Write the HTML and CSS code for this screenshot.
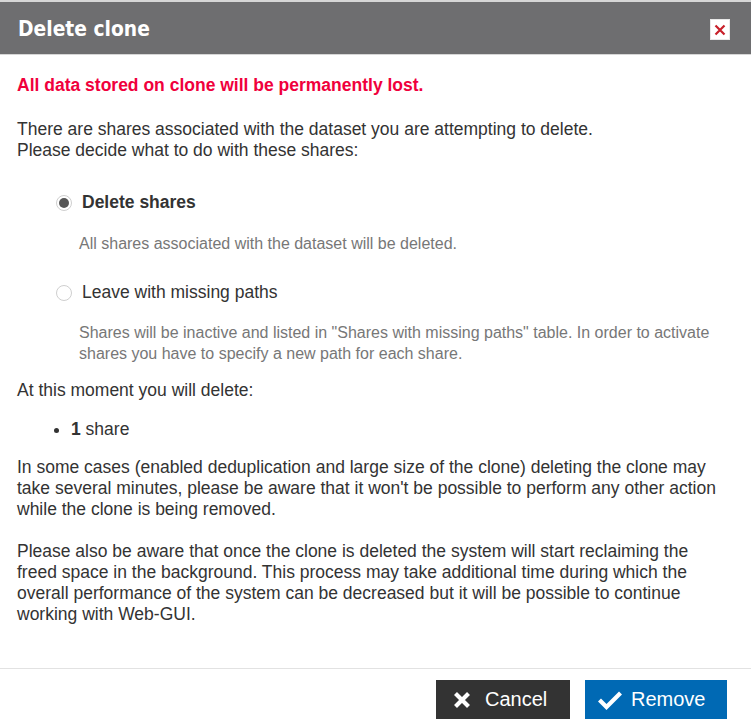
FILE: index.html
```html
<!DOCTYPE html>
<html>
<head>
<meta charset="utf-8">
<link rel="stylesheet" href="styles.css">
</head>
<body>
<div class="dialog">
  <div class="header">
    <h1 class="title">Delete clone</h1>
    <button class="close" aria-label="Close">
      <svg width="12" height="12" viewBox="0 0 12 12"><path d="M1.5 1.5 L10.5 10.5 M10.5 1.5 L1.5 10.5" stroke="#c8202a" stroke-width="2.2" fill="none"/></svg>
    </button>
  </div>
  <div class="content">
    <p class="warning">All data stored on clone will be permanently lost.</p>
    <p class="intro">There are shares associated with the dataset you are attempting to delete.<br>Please decide what to do with these shares:</p>
    <div class="option">
      <span class="radio checked"></span>
      <span class="opt-label bold">Delete shares</span>
    </div>
    <p class="opt-desc first">All shares associated with the dataset will be deleted.</p>
    <div class="option second">
      <span class="radio"></span>
      <span class="opt-label">Leave with missing paths</span>
    </div>
    <p class="opt-desc second">Shares will be inactive and listed in "Shares with missing paths" table. In order to activate shares you have to specify a new path for each share.</p>
    <p class="moment">At this moment you will delete:</p>
    <ul class="list">
      <li><b>1</b> share</li>
    </ul>
    <p class="para">In some cases (enabled deduplication and large size of the clone) deleting the clone may take several minutes, please be aware that it won't be possible to perform any other action while the clone is being removed.</p>
    <p class="para second">Please also be aware that once the clone is deleted the system will start reclaiming the freed space in the background. This process may take additional time during which the overall performance of the system can be decreased but it will be possible to continue working with Web-GUI.</p>
  </div>
  <div class="footer">
    <button class="btn cancel">
      <svg width="18" height="18" viewBox="0 0 18 18"><path d="M2.5 2.5 L15.5 15.5 M15.5 2.5 L2.5 15.5" stroke="#fff" stroke-width="4.2" fill="none"/></svg>
      <span>Cancel</span>
    </button>
    <button class="btn remove">
      <svg width="26" height="20" viewBox="0 0 26 20"><path d="M2.5 10 L9.5 17 L23.5 3" stroke="#fff" stroke-width="4.2" fill="none"/></svg>
      <span>Remove</span>
    </button>
  </div>
</div>
</body>
</html>
```

FILE: styles.css
```css
html, body {
  margin: 0;
  padding: 0;
  background: #fff;
}
body {
  font-family: "Liberation Sans", Arial, sans-serif;
  color: #333;
  font-size: 17.5px;
}
.dialog {
  width: 751px;
  height: 724px;
  display: flex;
  flex-direction: column;
}
.header {
  height: 52px;
  background: #6e6e70;
  border-top: 2px solid #d6d6d6;
  border-bottom: 1px solid #d6d6d6;
  display: flex;
  align-items: center;
  justify-content: space-between;
  padding: 0 21px 0 18px;
}
.title {
  margin: 0;
  font-family: "DejaVu Sans Condensed", "DejaVu Sans", sans-serif;
  font-stretch: condensed;
  font-weight: bold;
  font-size: 20.8px;
  color: #fff;
  padding-top: 1px;
}
.close {
  width: 20px;
  height: 21px;
  padding: 0;
  border: 1px solid #e8e8e8;
  background: #fff;
  display: flex;
  align-items: center;
  justify-content: center;
  margin: 3px 0 0 0;
}
.content {
  padding: 0 26px 0 17px;
  line-height: 21px;
}
.content p {
  margin: 0;
}
.warning {
  margin-top: 20px !important;
  color: #f0003c;
  font-weight: bold;
}
.intro {
  margin-top: 23px !important;
}
.option {
  display: flex;
  align-items: center;
  margin-top: 31px;
  padding-left: 39px;
  height: 21px;
}
.option.second {
  margin-top: 28px;
}
.radio {
  width: 16px;
  height: 16px;
  border: 1px solid #cfcfcf;
  border-radius: 50%;
  box-sizing: border-box;
  background: #fff;
  display: flex;
  align-items: center;
  justify-content: center;
  margin-right: 10px;
}
.radio.checked::after {
  content: "";
  width: 10px;
  height: 10px;
  border-radius: 50%;
  background: #555;
}
.opt-label.bold {
  font-weight: bold;
}
.opt-desc {
  font-size: 16px;
  color: #777;
  padding-left: 62px;
  margin-top: 20px !important;
}
.opt-desc.second {
  margin-top: 19px !important;
}
.moment {
  margin-top: 16px !important;
}
.list {
  margin: 18px 0 0 0;
  padding-left: 54px;
}
.list li {
  line-height: 21px;
}
.para {
  margin-top: 17px !important;
}
.para.second {
  margin-top: 21px !important;
}
.footer {
  margin-top: auto;
  border-top: 1px solid #e2e2e2;
  height: 56px;
  display: flex;
  justify-content: flex-end;
  align-items: flex-start;
  padding: 11px 24px 0 0;
  box-sizing: border-box;
  gap: 15px;
}
.btn {
  height: 39px;
  border: none;
  display: flex;
  align-items: center;
  color: #fff;
  font-family: "Liberation Sans", Arial, sans-serif;
  font-size: 20px;
  padding: 0;
  margin: 0;
}
.btn.cancel {
  width: 134px;
  background: #333;
  padding-left: 17px;
}
.btn.cancel span {
  margin-left: 14px;
}
.btn.remove {
  width: 142px;
  background: #0069b4;
  padding-left: 12px;
}
.btn.remove span {
  margin-left: 8px;
}
```
